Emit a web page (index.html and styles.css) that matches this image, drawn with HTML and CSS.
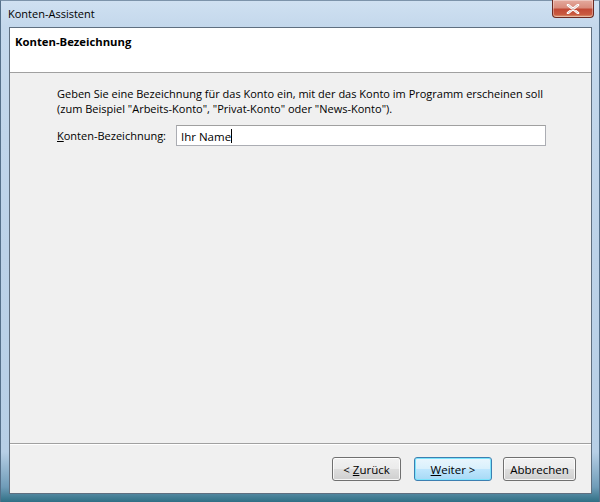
FILE: index.html
```html
<!DOCTYPE html>
<html lang="de">
<head>
<meta charset="utf-8">
<title>Konten-Assistent</title>
<link rel="stylesheet" href="styles.css">
</head>
<body>
<div class="window">
  <div class="titlebar">
    <span class="title">Konten-Assistent</span>
    <div class="close">
      <svg width="16" height="10" viewBox="0 0 16 10"><path d="M3 1 L13 9 M13 1 L3 9" stroke="#ffffff" stroke-width="2.6" stroke-linecap="round"/><path d="M3 1 L13 9 M13 1 L3 9" stroke="#8a3c30" stroke-width="0.6" stroke-opacity="0.5" fill="none"/></svg>
    </div>
  </div>
  <div class="client">
    <div class="header">Konten-Bezeichnung</div>
    <div class="content">
      <p class="desc">Geben Sie eine Bezeichnung für das Konto ein, mit der das Konto im Programm erscheinen soll<br>(zum Beispiel "Arbeits-Konto", "Privat-Konto" oder "News-Konto").</p>
      <div class="field">
        <label class="label"><u>K</u>onten-Bezeichnung:</label>
        <div class="input">Ihr Name<span class="caret"></span></div>
      </div>
    </div>
    <div class="separator"></div>
    <div class="footer">
      <button class="btn back">&lt; <u>Z</u>urück</button>
      <button class="btn default"><u>W</u>eiter &gt;</button>
      <button class="btn cancel">Abbrechen</button>
    </div>
  </div>
</div>
</body>
</html>
```
FILE: styles.css
```css
* { box-sizing: border-box; }
html, body { margin: 0; padding: 0; }
body {
  width: 600px;
  height: 502px;
  font-family: "Open Sans", "Noto Sans", sans-serif;
  font-size: 11px;
  color: #000;
  overflow: hidden;
}
.window {
  width: 600px;
  height: 502px;
  display: flex;
  flex-direction: column;
  padding: 0 7px 8px 8px;
  background: linear-gradient(180deg, #cfe0f1 0%, #c4d8ec 5%, #bcd2e8 50%, #b7cfe6 90%, #6f9cb8 97%, #2f6f84 100%);
  border-left: 1px solid #55708a;
  border-right: 1px solid #55708a;
  border-top: 1px solid #7c93aa;
}
.titlebar {
  height: 26px;
  display: flex;
  align-items: flex-start;
  position: relative;
}
.title {
  margin-top: 5px;
  margin-left: -1px;
  font-size: 11px;
  color: #000;
}
.close {
  position: absolute;
  right: -2px;
  top: -1px;
  width: 42px;
  height: 18px;
  border: 1px solid #6c2a22;
  border-top: none;
  border-radius: 0 0 4px 4px;
  background: linear-gradient(180deg, #e4aa9e 0%, #d98c7c 45%, #c24a36 55%, #c95a40 85%, #e0a07a 100%);
  display: flex;
  align-items: center;
  justify-content: center;
  box-shadow: inset 0 0 0 1px rgba(255,255,255,0.35);
}
.client {
  flex: 1;
  display: flex;
  flex-direction: column;
  background: #f0f0f0;
  border: 1px solid #5f6f80;
}
.header {
  height: 45px;
  background: #ffffff;
  border-bottom: 1px solid #a0a0a0;
  padding: 6px 0 0 5px;
  font-weight: bold;
  font-size: 11.3px;
}
.content {
  flex: 1;
  padding: 13px 0 0 47px;
}
.desc {
  margin: 0;
  line-height: 15px;
  font-size: 11px;
}
.field {
  display: flex;
  align-items: center;
  margin-top: 9px;
}
.label {
  width: 119px;
  font-size: 11px;
}
.input {
  width: 370px;
  height: 21px;
  background: #fff;
  border: 1px solid #abadb3;
  border-top-color: #a0a0a0;
  padding: 1px 0 0 4px;
  font-size: 11.5px;
  display: flex;
  align-items: center;
}
.caret {
  display: inline-block;
  width: 1px;
  height: 14px;
  background: #000;
}
.separator {
  height: 2px;
  border-top: 1px solid #a0a0a0;
  border-bottom: 1px solid #ffffff;
}
.footer {
  height: 48px;
  display: flex;
  justify-content: flex-end;
  align-items: flex-start;
  gap: 11px;
  padding: 12px 15px 0 0;
}
.btn {
  height: 24px;
  font-family: inherit;
  font-size: 11.5px;
  color: #000;
  border: 1px solid #707070;
  border-radius: 3px;
  background: linear-gradient(180deg, #f2f2f2 0%, #ebebeb 48%, #dddddd 52%, #cfcfcf 100%);
  box-shadow: inset 0 0 0 1px rgba(255,255,255,0.8);
  padding: 0;
}
.btn.back { width: 69px; margin-right: 2px; }
.btn.default {
  width: 78px;
  border-color: #3c7fb1;
  background: linear-gradient(180deg, #eaf6fd 0%, #d9f0fc 48%, #bee6fd 52%, #a7d9f5 100%);
  box-shadow: inset 0 0 0 1px #7ce4fc;
}
.btn.cancel { width: 73px; }
```
